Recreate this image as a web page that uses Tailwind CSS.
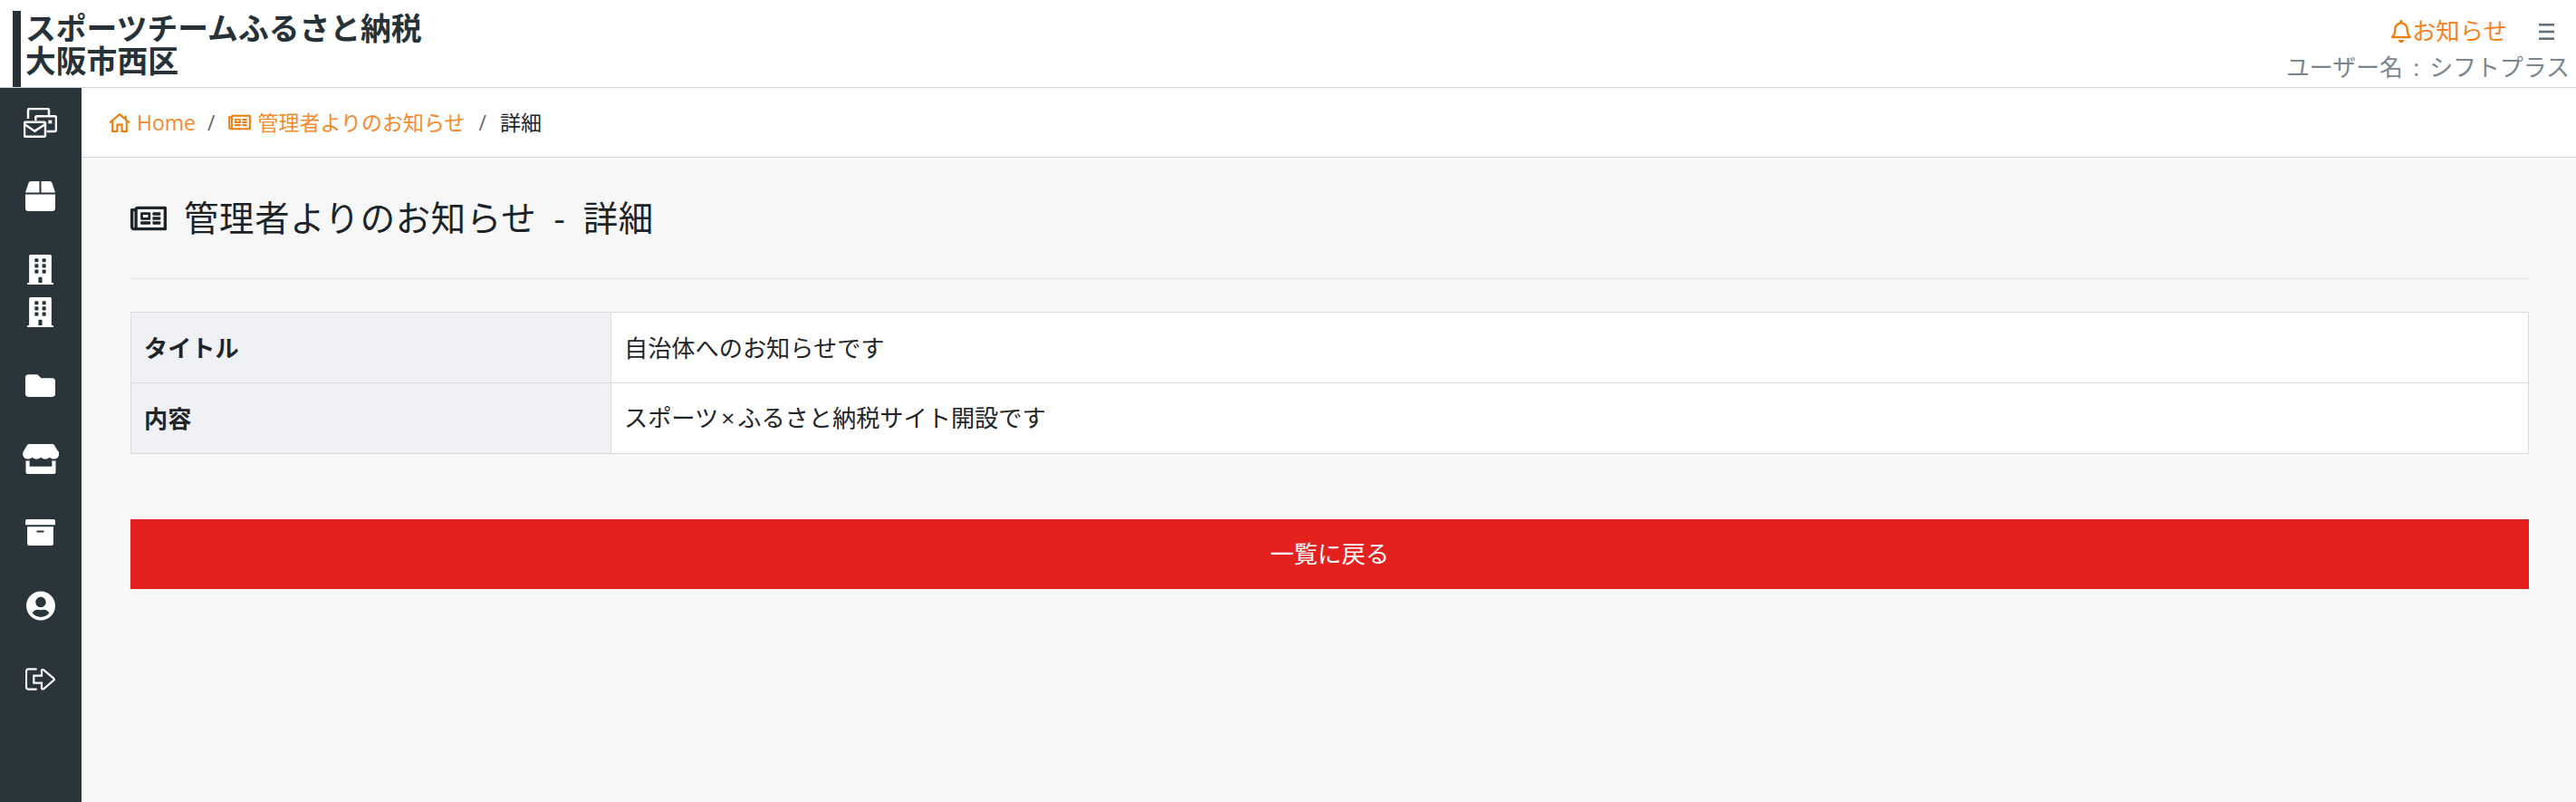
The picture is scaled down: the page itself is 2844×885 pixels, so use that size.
<!DOCTYPE html>
<html lang="ja">
<head>
<meta charset="utf-8">
<script src="https://cdn.jsdelivr.net/npm/@tailwindcss/browser@4"></script>
<title>管理者よりのお知らせ</title>
</head>
<body class="h-[885px] overflow-hidden bg-[#f7f7f7] text-[#212529] font-['Open_Sans','Noto_Sans_CJK_JP',sans-serif]">
<header class="h-[97px] bg-white border-b border-[#cfd8dc] flex justify-between">
  <div class="ml-[14px] mt-[12px] h-[84px] border-l-[9px] border-[#263238] pl-[5px] text-[33.8px] leading-[36px] font-bold text-[#263238]">
    <div class="pt-[1px]">スポーツチームふるさと納税</div>
    <div>大阪市西区</div>
  </div>
  <div class="flex flex-col items-end pr-[7px]">
    <div class="flex items-center h-[25px] mt-[22px] text-[#f5821f]">
      <svg class="w-[22px] h-[25px] fill-[#ef7d0b]" viewBox="0 0 448 512"><path d="M439.39 362.29c-19.32-20.76-55.47-51.99-55.47-154.29 0-77.7-54.48-139.9-127.94-155.16V32c0-17.67-14.32-32-31.98-32s-31.98 14.33-31.98 32v20.84C118.56 68.1 64.08 130.3 64.08 208c0 102.3-36.15 133.53-55.47 154.29-6 6.45-8.66 14.16-8.61 21.71.11 16.4 12.98 32 32.1 32h383.8c19.12 0 32-15.6 32.1-32 .05-7.55-2.61-15.27-8.61-21.71zM67.53 368c21.22-27.97 44.42-74.33 44.53-159.42 0-.2-.06-.38-.06-.58 0-61.86 50.14-112 112-112s112 50.14 112 112c0 .2-.06.38-.06.58.11 85.1 23.31 131.46 44.53 159.42H67.53zM224 512c35.32 0 63.97-28.65 63.97-64H160.03c0 35.35 28.65 64 63.97 64z"/></svg>
      <span class="text-[26.4px] leading-[25px] ml-[1px]">お知らせ</span>
      <svg class="w-[17px] h-[18px] ml-[35px] mr-[17px] fill-[#5f717d]" viewBox="0 0 17 18"><rect y="0" width="17" height="2.6"/><rect y="7.7" width="17" height="2.6"/><rect y="15.4" width="17" height="2.6"/></svg>
    </div>
    <div class="text-[25.9px] leading-[30px] mt-[12px] text-[#7b858d] whitespace-nowrap [word-spacing:4.5px]">ユーザー名 : シフトプラス</div>
  </div>
</header>
<div class="flex h-[788px]">
  <nav class="w-[90px] shrink-0 bg-[#29343b] flex flex-col items-center pt-[15px] pr-[1px] gap-[34px]">
    <a class="h-[47px] flex items-center justify-center">
      <svg class="w-[37px] h-[33px] fill-none stroke-white" viewBox="78 57 111 97" stroke-width="7.5"><path d="M93 92V64Q93 59 98 59H157Q162 59 162 64V80"/><path d="M118 98V88Q118 84 122 84H181Q186 84 186 88V129Q186 134 181 134H155"/><rect x="160" y="97" width="12" height="11" fill="white" stroke="none"/><rect x="81" y="103" width="69" height="48" rx="4"/><path d="M81 110L115 133L150 110"/></svg>
    </a>
    <a class="h-[47px] flex items-center justify-center">
      <svg class="w-[33px] h-[33px] fill-white" viewBox="0 0 512 512"><path d="M509.5 184.6L458.9 32.8C452.4 13.2 434.1 0 413.4 0H272v192h238.7c-.4-2.5-.4-5-1.2-7.4zM240 0H98.6c-20.7 0-39 13.2-45.5 32.8L2.5 184.6c-.8 2.4-.8 4.9-1.2 7.4H240V0zM0 224v240c0 26.5 21.5 48 48 48h416c26.5 0 48-21.5 48-48V224H0z"/></svg>
    </a>
    <a class="h-[94px] flex flex-col items-center">
      <span class="h-[47px] flex items-center"><svg class="w-[29px] h-[33px] fill-white" viewBox="0 0 448 512"><path d="M436 480h-20V24c0-13.255-10.745-24-24-24H56C42.745 0 32 10.745 32 24v456H12c-6.627 0-12 5.373-12 12v20h448v-20c0-6.627-5.373-12-12-12zM128 76c0-6.627 5.373-12 12-12h40c6.627 0 12 5.373 12 12v40c0 6.627-5.373 12-12 12h-40c-6.627 0-12-5.373-12-12V76zm0 96c0-6.627 5.373-12 12-12h40c6.627 0 12 5.373 12 12v40c0 6.627-5.373 12-12 12h-40c-6.627 0-12-5.373-12-12v-40zm52 148h-40c-6.627 0-12-5.373-12-12v-40c0-6.627 5.373-12 12-12h40c6.627 0 12 5.373 12 12v40c0 6.627-5.373 12-12 12zm76 160h-64v-84c0-6.627 5.373-12 12-12h40c6.627 0 12 5.373 12 12v84zm64-172c0 6.627-5.373 12-12 12h-40c-6.627 0-12-5.373-12-12v-40c0-6.627 5.373-12 12-12h40c6.627 0 12 5.373 12 12v40zm0-96c0 6.627-5.373 12-12 12h-40c-6.627 0-12-5.373-12-12v-40c0-6.627 5.373-12 12-12h40c6.627 0 12 5.373 12 12v40zm0-96c0 6.627-5.373 12-12 12h-40c-6.627 0-12-5.373-12-12V76c0-6.627 5.373-12 12-12h40c6.627 0 12 5.373 12 12v40z"/></svg></span>
      <span class="h-[47px] flex items-center"><svg class="w-[29px] h-[33px] fill-white" viewBox="0 0 448 512"><path d="M436 480h-20V24c0-13.255-10.745-24-24-24H56C42.745 0 32 10.745 32 24v456H12c-6.627 0-12 5.373-12 12v20h448v-20c0-6.627-5.373-12-12-12zM128 76c0-6.627 5.373-12 12-12h40c6.627 0 12 5.373 12 12v40c0 6.627-5.373 12-12 12h-40c-6.627 0-12-5.373-12-12V76zm0 96c0-6.627 5.373-12 12-12h40c6.627 0 12 5.373 12 12v40c0 6.627-5.373 12-12 12h-40c-6.627 0-12-5.373-12-12v-40zm52 148h-40c-6.627 0-12-5.373-12-12v-40c0-6.627 5.373-12 12-12h40c6.627 0 12 5.373 12 12v40c0 6.627-5.373 12-12 12zm76 160h-64v-84c0-6.627 5.373-12 12-12h40c6.627 0 12 5.373 12 12v84zm64-172c0 6.627-5.373 12-12 12h-40c-6.627 0-12-5.373-12-12v-40c0-6.627 5.373-12 12-12h40c6.627 0 12 5.373 12 12v40zm0-96c0 6.627-5.373 12-12 12h-40c-6.627 0-12-5.373-12-12v-40c0-6.627 5.373-12 12-12h40c6.627 0 12 5.373 12 12v40zm0-96c0 6.627-5.373 12-12 12h-40c-6.627 0-12-5.373-12-12V76c0-6.627 5.373-12 12-12h40c6.627 0 12 5.373 12 12v40z"/></svg></span>
    </a>
    <a class="h-[47px] flex items-center justify-center">
      <svg class="w-[33px] h-[33px] fill-white" viewBox="0 0 512 512"><path d="M464 128H272l-64-64H48C21.49 64 0 85.49 0 112v288c0 26.51 21.49 48 48 48h416c26.51 0 48-21.49 48-48V176c0-26.51-21.49-48-48-48z"/></svg>
    </a>
    <a class="h-[47px] flex items-center justify-center">
      <svg class="w-[40px] h-[33px] fill-white" viewBox="0 0 616 512"><path d="M602 118.6L537.1 15C531.3 5.7 521 0 510 0H106C95 0 84.7 5.7 78.9 15L14 118.6c-33.9 54.1-3.9 129.3 59.4 137.9 4.6.6 9.1.9 13.6.9 29.9 0 56.4-13.1 74.6-33.4 18.2 20.3 44.8 33.4 74.6 33.4 29.9 0 56.4-13.1 74.6-33.4 18.2 20.3 44.8 33.4 74.6 33.4 29.9 0 56.4-13.1 74.6-33.4 18.3 20.3 44.8 33.4 74.6 33.4 4.6 0 9-.3 13.6-.9 63.6-8.5 93.6-83.7 59.7-137.9zM529.5 288c-10 0-19.9-1.5-29.5-3.8V384H116v-99.8c-9.6 2.2-19.5 3.8-29.5 3.8-6 0-12.1-.4-18-1.2-5.6-.8-11.1-2.1-16.4-3.6V480c0 17.7 14.3 32 32 32h448c17.7 0 32-14.3 32-32V283.2c-5.4 1.6-10.8 2.9-16.4 3.6-6.1.8-12.1 1.2-18.2 1.2z"/></svg>
    </a>
    <a class="h-[47px] flex items-center justify-center">
      <svg class="w-[33px] h-[33px] fill-white" viewBox="0 0 512 512"><path d="M32 448c0 17.7 14.3 32 32 32h384c17.7 0 32-14.3 32-32V160H32v288zm160-212c0-6.6 5.4-12 12-12h104c6.6 0 12 5.4 12 12v8c0 6.6-5.4 12-12 12H204c-6.6 0-12-5.4-12-12v-8zM480 32H32C14.3 32 0 46.3 0 64v48c0 8.8 7.2 16 16 16h480c8.8 0 16-7.2 16-16V64c0-17.7-14.3-32-32-32z"/></svg>
    </a>
    <a class="h-[47px] flex items-center justify-center">
      <svg class="w-[32px] h-[33px] fill-white" viewBox="0 0 496 512"><path d="M248 8C111 8 0 119 0 256s111 248 248 248 248-111 248-248S385 8 248 8zm0 96c48.6 0 88 39.4 88 88s-39.4 88-88 88-88-39.4-88-88 39.4-88 88-88zm0 344c-58.7 0-111.3-26.6-146.5-68.2 18.8-35.4 55.6-59.8 98.5-59.8 2.4 0 4.8.4 7.1 1.1 13 4.2 26.6 6.9 40.9 6.9 14.3 0 28-2.7 40.9-6.9 2.3-.7 4.7-1.1 7.1-1.1 42.9 0 79.7 24.4 98.5 59.8C359.3 421.4 306.7 448 248 448z"/></svg>
    </a>
    <a class="h-[47px] flex items-center justify-center">
      <svg class="w-[33px] h-[25px] fill-none stroke-white" viewBox="84 1007 99 75" stroke-width="6.5"><path d="M122 1011H94Q87 1011 87 1018V1071Q87 1078 94 1078H122"/><path d="M112 1033H138V1015Q140 1010 145 1014L178 1042Q181 1045 178 1048L145 1076Q140 1079 138 1075V1057H112Z"/></svg>
    </a>
  </nav>
  <main class="flex-1 min-w-0">
    <div class="h-[77px] bg-white border-b border-[#cfd8dc] flex items-center pl-[30px] text-[23px] leading-[30px]">
      <a class="flex items-center text-[#f58a2e]">
        <svg class="w-[24px] h-[21px] fill-none stroke-[#ef7d0b]" viewBox="0 0 23 20" stroke-width="2"><path d="M1 10L11.5 1L22 10"/><path d="M18 6.5V2.5"/><path d="M4 8V19H9V12H14V19H19V8"/></svg>
        <span class="ml-[7px]">Home</span>
      </a>
      <span class="ml-[13px] mr-[15px] text-[#5f6b73]">/</span>
      <a class="flex items-center text-[#f58a2e]">
        <svg class="w-[25px] h-[22px] fill-[#ef7d0b]" viewBox="0 0 576 512"><path d="M552 64H112c-20.858 0-38.643 13.377-45.248 32H24c-13.255 0-24 10.745-24 24v272c0 30.928 25.072 56 56 56h496c13.255 0 24-10.745 24-24V88c0-13.255-10.745-24-24-24zM48 392V144h16v248c0 4.411-3.589 8-8 8s-8-3.589-8-8zm480 8H111.422c.374-2.614.578-5.283.578-8V112h416v288zM172 280h136c6.627 0 12-5.373 12-12v-96c0-6.627-5.373-12-12-12H172c-6.627 0-12 5.373-12 12v96c0 6.627 5.373 12 12 12zm28-80h80v40h-80v-40zm-40 140v-24c0-6.627 5.373-12 12-12h136c6.627 0 12 5.373 12 12v24c0 6.627-5.373 12-12 12H172c-6.627 0-12-5.373-12-12zm192 0v-24c0-6.627 5.373-12 12-12h104c6.627 0 12 5.373 12 12v24c0 6.627-5.373 12-12 12H364c-6.627 0-12-5.373-12-12zm0-144v-24c0-6.627 5.373-12 12-12h104c6.627 0 12 5.373 12 12v24c0 6.627-5.373 12-12 12H364c-6.627 0-12-5.373-12-12zm0 72v-24c0-6.627 5.373-12 12-12h104c6.627 0 12 5.373 12 12v24c0 6.627-5.373 12-12 12H364c-6.627 0-12-5.373-12-12z"/></svg>
        <span class="ml-[7px]">管理者よりのお知らせ</span>
      </a>
      <span class="mx-[15px] text-[#5f6b73]">/</span>
      <span>詳細</span>
    </div>
    <div class="pl-[54px] pr-[52px]">
      <div class="h-[134px] flex items-center border-b border-[#dddddd]">
        <svg class="w-[40px] h-[36px] fill-[#1c2429]" viewBox="0 0 576 512"><path d="M552 64H112c-20.858 0-38.643 13.377-45.248 32H24c-13.255 0-24 10.745-24 24v272c0 30.928 25.072 56 56 56h496c13.255 0 24-10.745 24-24V88c0-13.255-10.745-24-24-24zM48 392V144h16v248c0 4.411-3.589 8-8 8s-8-3.589-8-8zm480 8H111.422c.374-2.614.578-5.283.578-8V112h416v288zM172 280h136c6.627 0 12-5.373 12-12v-96c0-6.627-5.373-12-12-12H172c-6.627 0-12 5.373-12 12v96c0 6.627 5.373 12 12 12zm28-80h80v40h-80v-40zm-40 140v-24c0-6.627 5.373-12 12-12h136c6.627 0 12 5.373 12 12v24c0 6.627-5.373 12-12 12H172c-6.627 0-12-5.373-12-12zm192 0v-24c0-6.627 5.373-12 12-12h104c6.627 0 12 5.373 12 12v24c0 6.627-5.373 12-12 12H364c-6.627 0-12-5.373-12-12zm0-144v-24c0-6.627 5.373-12 12-12h104c6.627 0 12 5.373 12 12v24c0 6.627-5.373 12-12 12H364c-6.627 0-12-5.373-12-12zm0 72v-24c0-6.627 5.373-12 12-12h104c6.627 0 12 5.373 12 12v24c0 6.627-5.373 12-12 12H364c-6.627 0-12-5.373-12-12z"/></svg>
        <h1 class="ml-[19px] mb-[2px] text-[38.4px] tracking-[0.7px] leading-[44px] font-normal text-[#1c2429] [word-spacing:8.5px]">管理者よりのお知らせ - 詳細</h1>
      </div>
      <table class="w-full mt-[36px] border-collapse table-fixed text-[26.2px] leading-[38px] bg-white font-['Noto_Sans_CJK_JP','Open_Sans',sans-serif]">
        <tbody>
          <tr class="h-[78px]">
            <th class="w-[530px] bg-[#f0f1f5] border border-[#dcdcdc] text-left font-bold pl-[14px] pb-[2px]">タイトル</th>
            <td class="border border-[#dcdcdc] pl-[14px] pb-[2px]">自治体へのお知らせです</td>
          </tr>
          <tr class="h-[78px]">
            <th class="bg-[#f0f1f5] border border-[#dcdcdc] text-left font-bold pl-[14px] pb-[2px]">内容</th>
            <td class="border border-[#dcdcdc] pl-[14px] pb-[2px]">スポーツ<span class="mx-[3px] font-['Open_Sans']">×</span>ふるさと納税サイト開設です</td>
          </tr>
        </tbody>
      </table>
      <a class="mt-[72px] h-[77px] bg-[#e3211f] text-white text-[26.3px] flex items-center justify-center">一覧に戻る</a>
    </div>
  </main>
</div>
</body>
</html>
